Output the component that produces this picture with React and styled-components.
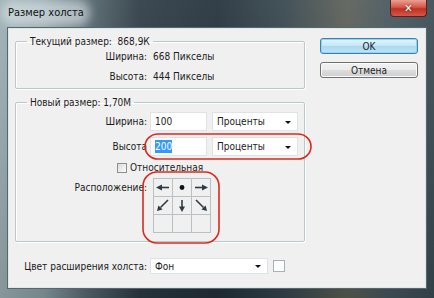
import styled, { createGlobalStyle } from "styled-components";

const GlobalStyle = createGlobalStyle`
  html, body {
    margin: 0;
    padding: 0;
    background: #2f3e48;
  }
  body {
    font-family: "DejaVu Sans Condensed", "Liberation Sans", sans-serif;
    font-size: 10px;
    color: #1b1b1b;
  }
`;

const ARROW = "#2e3b44";

const arrows = [
  "left",
  "dot",
  "right",
  "downleft",
  "down",
  "downright",
  null,
  null,
  null,
];

function Arrow({ kind }) {
  if (!kind) return null;
  return (
    <svg width="18" height="17" viewBox="0 0 18 17">
      {kind === "left" && (
        <>
          <line x1="15" y1="8.5" x2="7" y2="8.5" stroke={ARROW} strokeWidth="1.6" />
          <polygon points="2,8.5 8,5.5 8,11.5" fill={ARROW} />
        </>
      )}
      {kind === "right" && (
        <>
          <line x1="3" y1="8.5" x2="11" y2="8.5" stroke={ARROW} strokeWidth="1.6" />
          <polygon points="16,8.5 10,5.5 10,11.5" fill={ARROW} />
        </>
      )}
      {kind === "dot" && <circle cx="9" cy="8.5" r="2.4" fill="#111" />}
      {kind === "down" && (
        <>
          <line x1="9" y1="3" x2="9" y2="10" stroke={ARROW} strokeWidth="1.6" />
          <polygon points="9,15 6,9.5 12,9.5" fill={ARROW} />
        </>
      )}
      {kind === "downleft" && (
        <>
          <line x1="14" y1="3" x2="6.5" y2="10.5" stroke={ARROW} strokeWidth="1.6" />
          <polygon points="3,14 8.6,12.6 4.4,8.4" fill={ARROW} />
        </>
      )}
      {kind === "downright" && (
        <>
          <line x1="4" y1="3" x2="11.5" y2="10.5" stroke={ARROW} strokeWidth="1.6" />
          <polygon points="15,14 13.6,8.4 9.4,12.6" fill={ARROW} />
        </>
      )}
    </svg>
  );
}

export default function App() {
  return (
    <>
      <GlobalStyle />
      <Window>
        <TitleBar>
          <Title>Размер холста</Title>
          <CloseBtn>✕</CloseBtn>
        </TitleBar>
        <Client>
          <LeftCol>
            <Group>
              <Legend>Текущий размер:&nbsp; 868,9К</Legend>
              <InfoRow>
                <Label>Ширина:</Label>
                <Value>668 Пикселы</Value>
              </InfoRow>
              <InfoRow>
                <Label>Высота:</Label>
                <Value>444 Пикселы</Value>
              </InfoRow>
            </Group>

            <Group $gapTop={7} $pad="3px 0 8px">
              <Legend>Новый размер: 1,70М</Legend>
              <FieldRow>
                <Label>Ширина:</Label>
                <TextInput>100</TextInput>
                <Select $w={86}>Проценты</Select>
              </FieldRow>
              <FieldRow>
                <Label>Высота</Label>
                <TextInput>
                  <Selected>200</Selected>
                </TextInput>
                <Select $w={86}>Проценты</Select>
              </FieldRow>
              <CheckRow>
                <Check />
                <span>Относительная</span>
              </CheckRow>
              <AnchorRow>
                <Label $top={3}>Расположение:</Label>
                <Grid>
                  {arrows.map((a, i) => (
                    <Cell key={i}>
                      <Arrow kind={a} />
                    </Cell>
                  ))}
                </Grid>
              </AnchorRow>
            </Group>

            <BottomRow>
              <Label>Цвет расширения холста:</Label>
              <Select $w={118} $h={16}>Фон</Select>
              <Swatch />
            </BottomRow>
          </LeftCol>

          <RightCol>
            <Button $primary>OK</Button>
            <Button>Отмена</Button>
          </RightCol>
        </Client>

        <Marks width="434" height="298" viewBox="0 0 434 298">
          <rect x="145" y="134" width="166" height="25" rx="13" ry="12.5" fill="none" stroke="#d92a1f" strokeWidth="1.6" />
          <rect x="143" y="172" width="76" height="71" rx="14" ry="14" fill="none" stroke="#d92a1f" strokeWidth="1.6" />
        </Marks>
      </Window>
    </>
  );
}

const Window = styled.div`
  position: relative;
  width: 434px;
  height: 298px;
  display: flex;
  flex-direction: column;
  overflow: hidden;
  background:
    linear-gradient(180deg, rgba(255, 255, 255, 0.08) 0%, rgba(0, 0, 0, 0.15) 100%),
    linear-gradient(
      90deg,
      #9db0b4 0%,
      #8a9ea4 10%,
      #56686f 20%,
      #2c3a44 32%,
      #222f39 50%,
      #34444c 65%,
      #5a5e56 80%,
      #45555d 90%,
      #3a4a53 100%
    );
`;

const TitleBar = styled.div`
  height: 27px;
  flex: none;
  display: flex;
  justify-content: space-between;
  align-items: flex-start;
  padding: 0 7px 0 8px;
`;

const Title = styled.div`
  margin-top: 6px;
  font-size: 11px;
  line-height: 14px;
  color: #111;
  background: rgba(225, 235, 238, 0.55);
  box-shadow: 0 0 8px 6px rgba(225, 235, 238, 0.55);
  border-radius: 6px;
`;

const CloseBtn = styled.div`
  width: 37px;
  height: 17px;
  box-sizing: border-box;
  border: 1px solid #5b2018;
  border-top: none;
  border-radius: 0 0 4px 4px;
  background: linear-gradient(180deg, #eaa092 0%, #d4574a 45%, #c0301f 55%, #d4584a 100%);
  color: #fff;
  font-size: 11px;
  font-weight: bold;
  display: flex;
  align-items: center;
  justify-content: center;
  text-shadow: 0 0 2px #5b2018;
`;

const Client = styled.div`
  flex: 1;
  margin: 0 7px 9px 7px;
  background: #f0f0f0;
  border: 1px solid #55676f;
  box-shadow: inset 0 0 0 1px #dfe6e8;
  display: flex;
  align-items: flex-start;
`;

const LeftCol = styled.div`
  width: 290px;
  padding: 7px 0 0 7px;
  display: flex;
  flex-direction: column;
`;

const Group = styled.fieldset`
  margin: ${(p) => p.$gapTop || 0}px 0 0 0;
  padding: ${(p) => p.$pad || "2px 0 5px"};
  border: 1px solid #bcc7cb;
  border-radius: 2px;
  box-shadow: inset 1px 1px 0 #fff, 1px 1px 0 #fff;
  display: flex;
  flex-direction: column;
  min-width: 0;
`;

const Legend = styled.legend`
  margin-left: 11px;
  padding: 0 3px;
  line-height: 13px;
`;

const InfoRow = styled.div`
  display: flex;
  align-items: center;
  gap: 6px;
  height: 13px;
  & + & {
    margin-top: 7px;
  }
`;

const Label = styled.div`
  width: 131px;
  flex: none;
  display: flex;
  justify-content: flex-end;
  white-space: nowrap;
  line-height: 13px;
  margin-top: ${(p) => p.$top || 0}px;
`;

const Value = styled.div`
  line-height: 13px;
`;

const FieldRow = styled.div`
  display: flex;
  align-items: center;
  gap: 3px;
  height: 19px;
  & + & {
    margin-top: 6px;
  }
  & > div:last-child {
    margin-left: 2px;
  }
`;

const TextInput = styled.div`
  width: 57px;
  height: 19px;
  box-sizing: border-box;
  background: #fff;
  border: 1px solid #dde3e6;
  padding-left: 4px;
  display: flex;
  align-items: center;
`;

const Selected = styled.span`
  background: #3399ff;
  color: #fff;
  line-height: 13px;
`;

const Select = styled.div`
  position: relative;
  width: ${(p) => p.$w}px;
  height: ${(p) => p.$h || 19}px;
  box-sizing: border-box;
  background: #fff;
  border: 1px solid #dde3e6;
  padding-left: 4px;
  display: flex;
  align-items: center;
  &::after {
    content: "";
    position: absolute;
    right: 6px;
    top: 50%;
    margin-top: -1px;
    border-left: 3px solid transparent;
    border-right: 3px solid transparent;
    border-top: 3px solid #111;
  }
`;

const CheckRow = styled.div`
  display: flex;
  align-items: center;
  gap: 3px;
  height: 13px;
  margin-top: 5px;
  padding-left: 101px;
`;

const Check = styled.div`
  width: 10px;
  height: 10px;
  box-sizing: border-box;
  border: 1px solid #8e8f8f;
  background: linear-gradient(135deg, #dcdcdc, #fafafa);
`;

const AnchorRow = styled.div`
  display: flex;
  align-items: flex-start;
  gap: 6px;
  margin-top: 4px;
`;

const Grid = styled.div`
  display: grid;
  grid-template-columns: repeat(3, 18px);
  grid-template-rows: repeat(3, 17px);
  gap: 1px;
  padding: 1px;
  background: #b9c1c4;
`;

const Cell = styled.div`
  background: #f0f0f0;
  display: flex;
  align-items: center;
  justify-content: center;
`;

const BottomRow = styled.div`
  display: flex;
  align-items: center;
  gap: 3px;
  margin-top: 16px;
  padding-left: 1px;
`;

const Swatch = styled.div`
  width: 12px;
  height: 12px;
  margin-left: 2px;
  box-sizing: border-box;
  border: 1px solid #a9b3b7;
  background: #fff;
`;

const RightCol = styled.div`
  display: flex;
  flex-direction: column;
  gap: 8px;
  padding: 10px 0 0 15px;
`;

const Button = styled.div`
  width: 98px;
  height: 16px;
  box-sizing: border-box;
  border: 1px solid ${(p) => (p.$primary ? "#3c7fb1" : "#707070")};
  border-radius: 3px;
  background: ${(p) =>
    p.$primary
      ? "linear-gradient(180deg, #e5f5fc 0%, #c4e6f7 50%, #a9d9f1 52%, #bfe4f6 100%)"
      : "linear-gradient(180deg, #f2f2f2 0%, #ebebeb 50%, #dddddd 52%, #cfcfcf 100%)"};
  box-shadow: ${(p) => (p.$primary ? "inset 0 0 0 1px #8fd5f5" : "inset 0 0 0 1px #fbfbfb")};
  display: flex;
  align-items: center;
  justify-content: center;
  line-height: 13px;
`;

const Marks = styled.svg`
  position: absolute;
  left: 0;
  top: 0;
  pointer-events: none;
`;
